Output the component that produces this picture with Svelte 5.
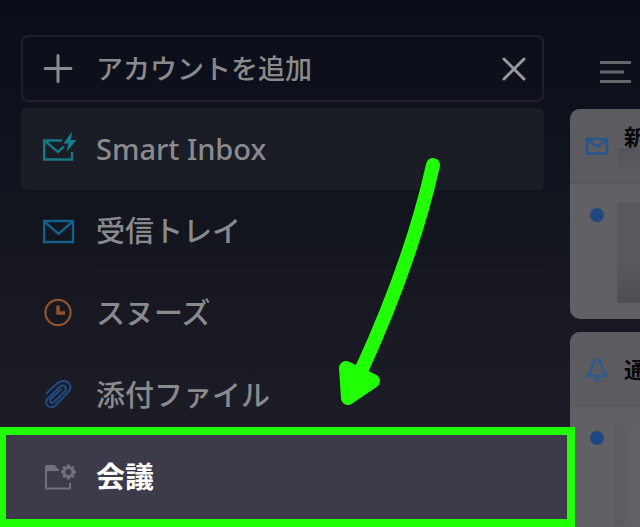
<script lang="ts">
  type Folder = {
    id: "smart" | "inbox" | "snooze" | "files" | "meeting";
    label: string;
  };

  const folders: Folder[] = [
    { id: "smart", label: "Smart Inbox" },
    { id: "inbox", label: "受信トレイ" },
    { id: "snooze", label: "スヌーズ" },
    { id: "files", label: "添付ファイル" },
    { id: "meeting", label: "会議" }
  ];

  // teeth of the gear on the meeting folder
  const teeth = [0, 45, 90, 135, 180, 225, 270, 315];
</script>

<main>
  <nav class="sidebar">
    <div class="add">
      <button class="add-account" type="button">
        <svg class="icon" width="34" height="34" viewBox="0 0 34 34" aria-hidden="true">
          <path d="M4 16.500H30M17 3.500V29.500" stroke="#8b8b8d" stroke-width="3" stroke-linecap="round" />
        </svg>
        アカウントを追加
      </button>
      <button class="close" type="button" aria-label="閉じる">
        <svg width="26" height="26" viewBox="0 0 26 26" aria-hidden="true">
          <path d="M3 3L23 23M23 3L3 23" stroke="#98989a" stroke-width="3" stroke-linecap="round" />
        </svg>
      </button>
    </div>

    <ul>
      {#each folders as folder}
        <li class={folder.id}>
          <button class="folder" type="button">
            <svg class="icon" width="34" height="34" viewBox="0 0 34 34" fill="none" aria-hidden="true">
              {#if folder.id === "smart"}
                <g stroke="#167883" stroke-width="2.4">
                  <path d="M21 8.500H3.200V27.500H31V20" />
                  <path d="M4 9L17 20L23 14.500" />
                </g>
                <path d="M31.500 -1L22.500 11.500H27.500L25.500 20L35.500 8H29.500Z" fill="#167f8c" />
              {:else if folder.id === "inbox"}
                <g stroke="#155f8b" stroke-width="2.4">
                  <path d="M3.200 7H32V28H3.200Z" />
                  <path d="M4 8L17.500 20L31 8" />
                </g>
              {:else if folder.id === "snooze"}
                <circle cx="17" cy="16.500" r="12.600" stroke="#91522c" stroke-width="2.2" />
                <path d="M17 9.500V17H24" stroke="#91522c" stroke-width="3.4" />
              {:else if folder.id === "files"}
                <path
                  d="M5.500 15.500L15.500 6C22 -.5 33.500 5 28 13L15 27C10 32 2 27 6.500 21L18.500 9C22 5.500 27 9 24 13L12.500 24.500M12.500 24.500C10 26 8 23 10 21L20 11.500"
                  stroke="#1d4a80"
                  stroke-width="2.2"
                  stroke-linecap="round"
                  stroke-linejoin="round"
                />
              {:else}
                <path d="M18 10H5V28.500H29V23" stroke="#72707c" stroke-width="2" stroke-linejoin="round" />
                <path d="M4 11V7Q4 5 6 5H13Q14 5 15 6.500L18 11Z" fill="#72707c" />
                <circle cx="27.500" cy="12" r="4.500" stroke="#72707c" stroke-width="3" />
                {#each teeth as angle}
                  <path d="M26 4.500H29V8H26Z" fill="#72707c" transform="rotate({angle} 27.500 12)" />
                {/each}
              {/if}
            </svg>
            {folder.label}
          </button>
        </li>
      {/each}
    </ul>

    <svg class="arrow" width="110" height="260" viewBox="330 150 110 260" aria-hidden="true">
      <path d="M433 165Q412 260 361 371" fill="none" stroke="#20ff06" stroke-width="14" stroke-linecap="round" />
      <path d="M346 368L373 381L348 398Z" fill="#20ff06" stroke="#20ff06" stroke-width="14" stroke-linejoin="round" />
    </svg>
  </nav>

  <div class="mail">
    <button class="menu" type="button" aria-label="メニュー">
      <svg width="34" height="24" viewBox="0 0 34 24" aria-hidden="true">
        <path d="M1 2.500H32M1 12H25M1 21.500H32" stroke="#66666b" stroke-width="3" />
      </svg>
    </button>

    <section class="card first">
      <header>
        <svg width="24" height="24" viewBox="0 0 24 24" fill="none" stroke="#28558e" stroke-width="2.4" aria-hidden="true">
          <path d="M2 5H22V19.500H2ZM3 6L12 13L21 6" />
        </svg>
        <h2>新</h2>
        <span class="sub"></span>
      </header>
      <div class="message">
        <i class="dot"></i>
        <span class="preview"></span>
      </div>
    </section>

    <section class="card second">
      <header>
        <svg width="24" height="24" viewBox="0 0 24 24" fill="none" stroke="#2b5c93" stroke-width="2.4" stroke-linejoin="round" aria-hidden="true">
          <path d="M2.500 19L5.500 14.500L8 6.500Q9.500 2.500 12 2.500Q14.500 2.500 16 6.500L18.500 14.500L21.500 19Z" />
          <path d="M12 1V3M9 22Q12 24 15 22" />
        </svg>
        <h2>通</h2>
      </header>
      <div class="message">
        <i class="dot"></i>
        <span class="preview"></span>
      </div>
    </section>
  </div>
</main>

<style>
  :global(body) {
    background: #0b0f1b;
  }
  main {
    display: grid;
    grid-template-columns: minmax(0, 1fr) 70px;
    min-height: 100vh;
    overflow: hidden;
    background: linear-gradient(#0a0e1a, #0e111c 20%, #13151f 45%, #1b1b25 72%, #1f1e29);
    font-family: "Noto Sans", "Noto Sans CJK JP", sans-serif;
    font-weight: 500;
  }
  button {
    padding: 0;
    border: 0;
    background: none;
    color: inherit;
    font: inherit;
    text-align: left;
    cursor: pointer;
  }
  svg {
    display: block;
    flex: none;
    overflow: visible;
  }
  .sidebar {
    position: relative;
    z-index: 1;
    padding: 35px 26px 0 21px;
    color: #8a8a8c;
  }
  .add {
    display: flex;
    align-items: center;
    box-sizing: border-box;
    height: 67px;
    margin-bottom: 6px;
    padding: 0 15px 0 18px;
    border: 2px solid #1f202b;
    border-radius: 7px;
  }
  .add-account,
  .folder {
    display: flex;
    align-items: center;
    gap: 21px;
  }
  .add-account {
    flex: 1;
    font-size: 27px;
    line-height: 40px;
  }
  ul {
    margin: 0;
    padding: 0;
    list-style: none;
  }
  .folder {
    box-sizing: border-box;
    width: 100%;
    height: 82px;
    padding-left: 20px;
    font-size: 29px;
    line-height: 40px;
  }
  .smart {
    border-radius: 6px;
    background: #1a1c26;
  }
  .inbox,
  .snooze {
    background: linear-gradient(#1b1c26, #1b1c26) 75px 100% / 100% 1px no-repeat;
  }
  .meeting {
    margin: -9px -31px 0 -21px;
    border: 8px solid #20ff06;
    border-left-width: 6px;
    background: #3d3a4a;
    color: #fff;
    font-weight: 700;
  }
  .meeting .folder {
    height: 84px;
    padding-left: 35px;
  }
  .arrow {
    position: absolute;
    top: 150px;
    left: 330px;
    pointer-events: none;
  }
  .mail {
    display: flex;
    flex-direction: column;
    min-width: 0;
    padding-top: 60px;
    overflow: hidden;
  }
  .menu {
    padding-left: 29px;
    margin-bottom: 25px;
  }
  .card {
    border-radius: 10px 0 0 10px;
    background: #606065;
    overflow: hidden;
  }
  .first {
    height: 210px;
    margin-bottom: 13px;
  }
  .second {
    flex: 1;
    border-bottom-left-radius: 0;
  }
  header {
    display: grid;
    grid-template-columns: 24px 1fr;
    column-gap: 15px;
    align-items: center;
    box-sizing: border-box;
    height: 75px;
    padding-left: 15px;
    border-bottom: 1px solid #55565b;
    background: #5b5b60;
  }
  .first header {
    grid-template-rows: 24px 20px;
    align-content: center;
  }
  .first header svg {
    grid-row: 1 / 3;
  }
  h2 {
    margin: 0;
    color: #09090c;
    font-size: 22px;
    line-height: 24px;
    font-weight: 700;
    white-space: nowrap;
  }
  .sub {
    height: 20px;
    margin-left: -6px;
    background: linear-gradient(#535359, #5a5a5f);
  }
  .message {
    display: grid;
    grid-template-columns: 14px 1fr;
    column-gap: 13px;
    padding: 18px 0 0 20px;
  }
  .dot {
    width: 14px;
    height: 14px;
    margin-top: 6px;
    border-radius: 50%;
    background: #1f4780;
  }
  .preview {
    height: 101px;
    background: linear-gradient(#57595e, #58585d 60%, #4e4e53);
  }
  .second .message {
    column-gap: 10px;
  }
  .second .preview {
    background: linear-gradient(90deg, #5a5b61, #626267);
  }
</style>
